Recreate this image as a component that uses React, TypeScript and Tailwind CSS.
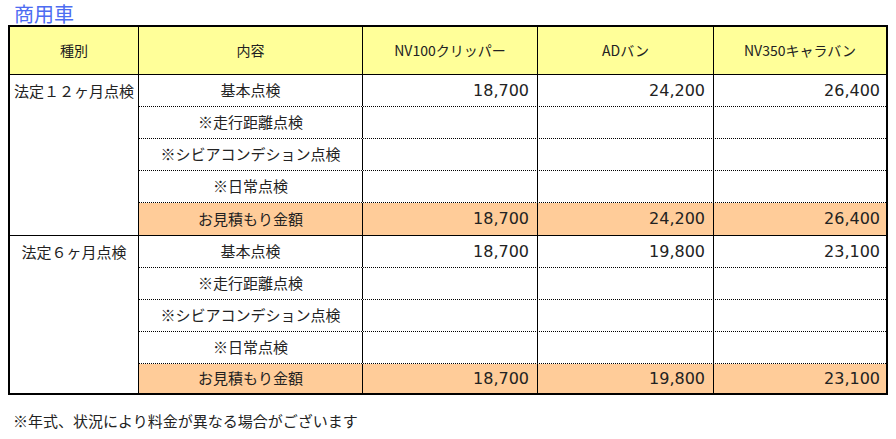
import React from "react";

const JP = "font-['Noto_Sans_CJK_JP','Noto_Sans',sans-serif]";
const NUM = "font-['DejaVu_Sans','Noto_Sans_CJK_JP',sans-serif]";

type Row = { label: string; v: [string, string, string]; total?: boolean };

const groups: { name: string; rows: Row[] }[] = [
  {
    name: "法定１２ヶ月点検",
    rows: [
      { label: "基本点検", v: ["18,700", "24,200", "26,400"] },
      { label: "※走行距離点検", v: ["", "", ""] },
      { label: "※シビアコンデション点検", v: ["", "", ""] },
      { label: "※日常点検", v: ["", "", ""] },
      { label: "お見積もり金額", v: ["18,700", "24,200", "26,400"], total: true },
    ],
  },
  {
    name: "法定６ヶ月点検",
    rows: [
      { label: "基本点検", v: ["18,700", "19,800", "23,100"] },
      { label: "※走行距離点検", v: ["", "", ""] },
      { label: "※シビアコンデション点検", v: ["", "", ""] },
      { label: "※日常点検", v: ["", "", ""] },
      { label: "お見積もり金額", v: ["18,700", "19,800", "23,100"], total: true },
    ],
  },
];

function DataRow({ row, last, short }: { row: Row; last: boolean; short: boolean }) {
  return (
    <div
      className={`flex ${short ? "h-[29px]" : "h-[32px]"} ${last ? "" : "border-b border-dotted border-black"} ${
        row.total ? "bg-[#ffcc99]" : ""
      }`}
    >
      <div className={`w-[224px] shrink-0 border-r border-black flex items-center justify-center text-[15px] ${JP}`}>
        {row.label}
      </div>
      <div className={`w-[175px] shrink-0 border-r border-black flex items-center justify-end pr-2 text-[16px] ${NUM}`}>
        {row.v[0]}
      </div>
      <div className={`w-[176px] shrink-0 border-r border-black flex items-center justify-end pr-2 text-[16px] ${NUM}`}>
        {row.v[1]}
      </div>
      <div className={`flex-1 flex items-center justify-end pr-[6px] text-[16px] ${NUM}`}>{row.v[2]}</div>
    </div>
  );
}

export default function App() {
  return (
    <div className={`w-[896px] h-[439px] bg-white text-[#222] ${JP}`}>
      <div className="h-[25px] pt-[4px] pl-[14px] text-[20px] leading-[20px] text-[#4d6cf2]">商用車</div>
      <div className="ml-2 w-[880px] border-2 border-black">
        <div className="flex h-[48px] bg-[#ffff99] border-b border-black text-[14px]">
          <div className="w-[129px] shrink-0 border-r border-black flex items-center justify-center">種別</div>
          <div className="w-[224px] shrink-0 border-r border-black flex items-center justify-center">内容</div>
          <div className="w-[175px] shrink-0 border-r border-black flex items-center justify-center">NV100クリッパー</div>
          <div className="w-[176px] shrink-0 border-r border-black flex items-center justify-center">ADバン</div>
          <div className="flex-1 flex items-center justify-center">NV350キャラバン</div>
        </div>
        {groups.map((g, gi) => (
          <div key={gi} className={`flex ${gi < groups.length - 1 ? "border-b border-black" : ""}`}>
            <div className="w-[129px] shrink-0 border-r border-black">
              <div className="h-[32px] flex items-center justify-center text-[15px]">{g.name}</div>
            </div>
            <div className="flex-1 flex flex-col">
              {g.rows.map((r, ri) => (
                <DataRow
                  key={ri}
                  row={r}
                  last={ri === g.rows.length - 1}
                  short={gi === groups.length - 1 && ri === g.rows.length - 1}
                />
              ))}
            </div>
          </div>
        ))}
      </div>
      <div className="mt-[16px] pl-[13px] text-[15px] leading-[20px]">※年式、状況により料金が異なる場合がございます</div>
    </div>
  );
}
